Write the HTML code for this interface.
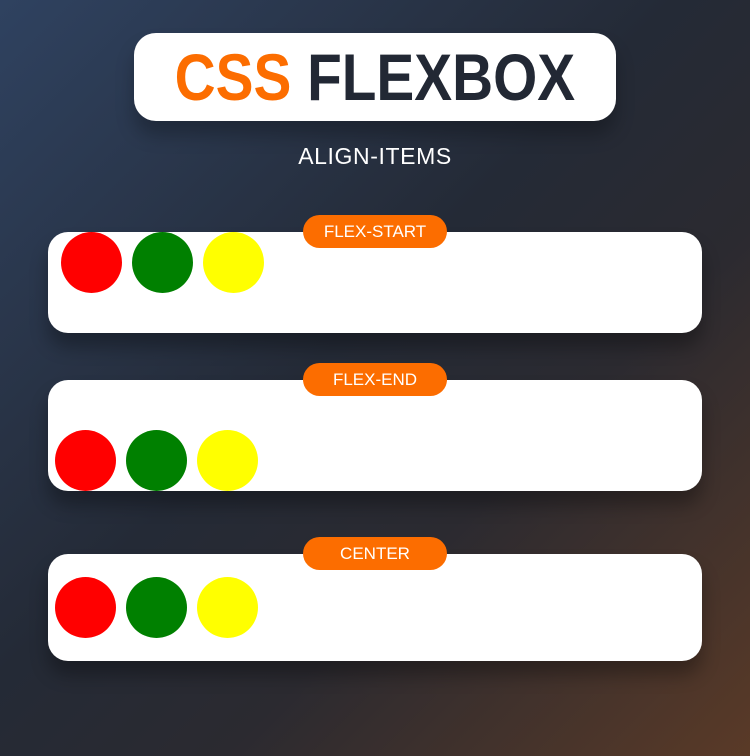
<!DOCTYPE html>
<html><head><style>
html,body{margin:0;padding:0}
body{width:750px;height:756px;position:relative;overflow:hidden;font-family:"Liberation Sans",sans-serif;
background:linear-gradient(135deg,#2f4260 0%,#242a36 45%,#2b2a30 65%,#5a3a27 100%);}
.title{position:absolute;left:134px;top:33px;width:482px;height:88px;background:#fff;border-radius:22px;box-shadow:0 14px 18px rgba(0,0,0,.25);text-align:center}
.title span.t{display:inline-block;font-weight:bold;font-size:66px;line-height:88px;transform:scaleX(.86);white-space:nowrap;color:#222834}
.title .o{color:#fc6d00}
.sub{position:absolute;left:0;width:750px;top:143px;text-align:center;color:#fff;font-size:23px;font-weight:300;letter-spacing:.6px}
.box{position:absolute;left:48px;width:654px;background:#fff;border-radius:20px;box-shadow:0 14px 18px rgba(0,0,0,.3)}
.c{position:absolute;width:61px;height:61px;border-radius:50%}
.badge{position:absolute;left:303px;width:144px;height:33px;border-radius:17px;background:#fc6d00;color:#fff;font-size:17px;line-height:33px;text-align:center;z-index:2}
</style></head><body>
<div class="title"><span class="t"><span class="o">CSS</span> FLEXBOX</span></div>
<div class="sub">ALIGN-ITEMS</div>

<div class="box" style="top:232px;height:101px"></div>
<div class="badge" style="top:215px">FLEX-START</div>
<div class="c" style="left:61px;top:232px;background:#f00"></div>
<div class="c" style="left:132px;top:232px;background:#008000"></div>
<div class="c" style="left:203px;top:232px;background:#ff0"></div>

<div class="box" style="top:380px;height:111px"></div>
<div class="badge" style="top:363px">FLEX-END</div>
<div class="c" style="left:55px;top:430px;background:#f00"></div>
<div class="c" style="left:126px;top:430px;background:#008000"></div>
<div class="c" style="left:197px;top:430px;background:#ff0"></div>

<div class="box" style="top:554px;height:107px"></div>
<div class="badge" style="top:537px">CENTER</div>
<div class="c" style="left:55px;top:577px;background:#f00"></div>
<div class="c" style="left:126px;top:577px;background:#008000"></div>
<div class="c" style="left:197px;top:577px;background:#ff0"></div>
</body></html>
